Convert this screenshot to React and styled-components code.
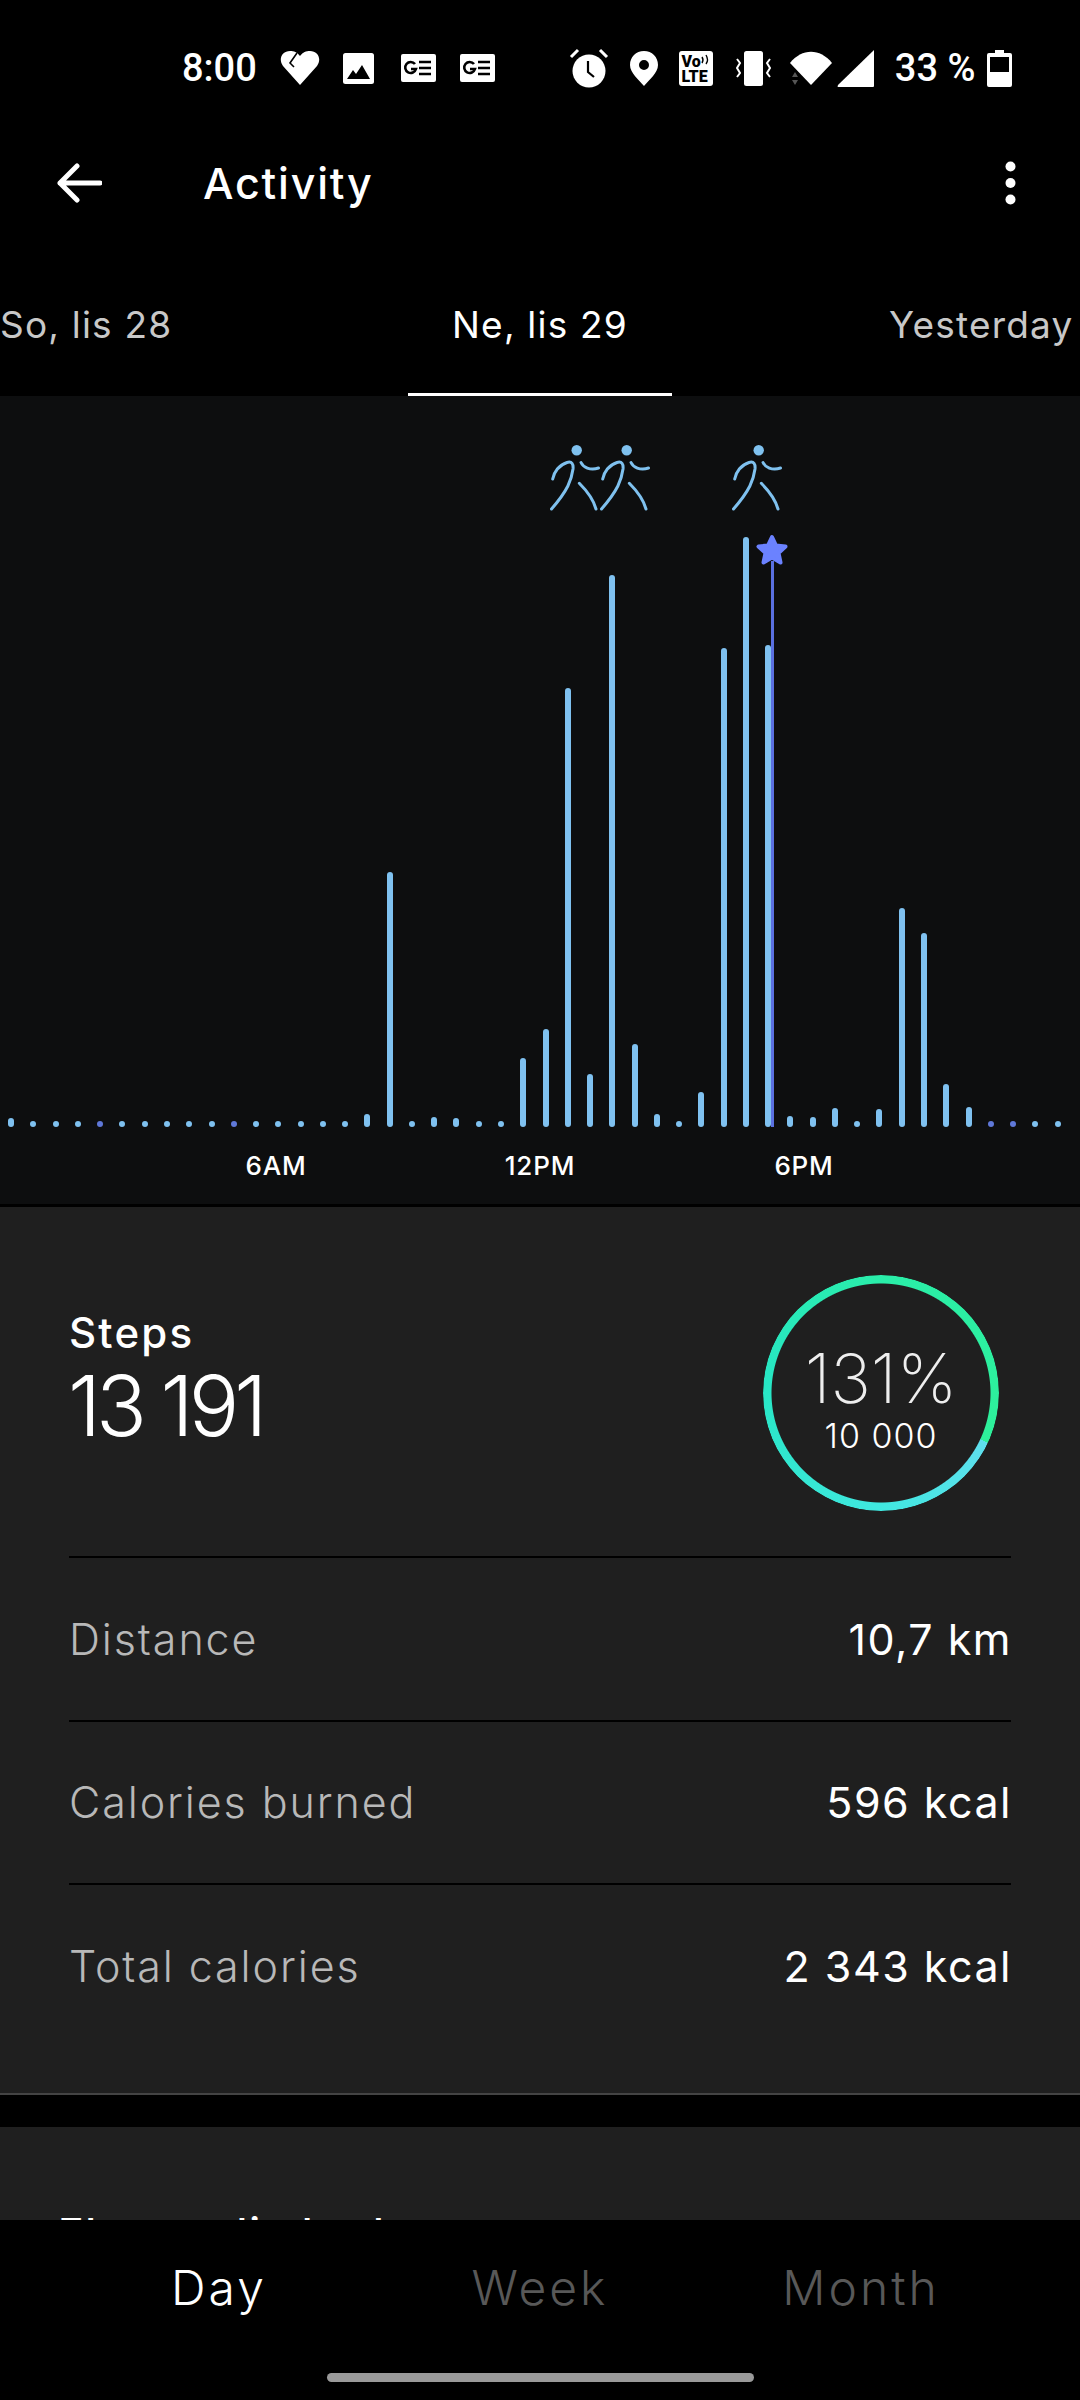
import styled, { createGlobalStyle } from "styled-components";

const GlobalStyle = createGlobalStyle`
  html, body {
    margin: 0;
    padding: 0;
    background: #000;
  }
  * { box-sizing: border-box; }
`;

const Page = styled.div`
  width: 1080px;
  height: 2400px;
  overflow: hidden;
  background: #000;
  color: #fff;
  font-family: Inter, "Noto Sans", sans-serif;
  display: flex;
  flex-direction: column;
`;

const StatusBar = styled.div`
  height: 92px;
  padding: 44px 0 0 182px;
  display: flex;
  align-items: center;
  font-family: Roboto, sans-serif;
  font-weight: 500;
  font-size: 38px;
`;

const StatusText = styled.span`
  margin-left: ${(p) => p.$ml || 0}px;
  white-space: nowrap;
`;

const StatusIcon = styled.svg`
  flex: none;
  margin-left: ${(p) => p.$ml || 0}px;
  fill: #fff;
`;

const Toolbar = styled.div`
  height: 182px;
  padding: 0 64px 0 57px;
  display: flex;
  align-items: center;
  justify-content: space-between;
`;

const ToolbarLeft = styled.div`
  display: flex;
  align-items: center;
  gap: 101px;
`;

const Title = styled.div`
  font-size: 43px;
  font-weight: 500;
  letter-spacing: 1.8px;
`;

const DateTabs = styled.div`
  height: 122px;
  display: grid;
  grid-template-columns: 1fr 264px 1fr;
`;

const DateTab = styled.div`
  font-size: 37px;
  letter-spacing: 1.2px;
  color: ${(p) => (p.$active ? "#fff" : "#c8c8c8")};
  padding: 28px 0 0 ${(p) => p.$indent || 0}px;
  white-space: nowrap;
  text-align: ${(p) => p.$align || "center"};
  border-bottom: 3px solid ${(p) => (p.$active ? "#fff" : "transparent")};
`;

const Chart = styled.div`
  height: 808px;
  background: #0d0e0f;
`;

const Plot = styled.div`
  position: relative;
  height: 731px;
  display: flex;
  align-items: flex-end;
`;

const Slot = styled.div`
  width: 22.27px;
  flex: none;
  display: flex;
  justify-content: center;
`;

const Bar = styled.div`
  width: 6px;
  border-radius: 3px;
  background: ${(p) => (p.$purple ? "#5f78d8" : "#7fc1f0")};
`;

const Marker = styled.svg`
  position: absolute;
  top: 49px;
  left: ${(p) => p.$x}px;
  fill: none;
  stroke: #7fc1ef;
  stroke-width: 3;
  stroke-linecap: round;
`;

const GoalLine = styled.div`
  position: absolute;
  left: 771px;
  top: 165px;
  bottom: 0;
  width: 3px;
  background: #5a70e0;
`;

const GoalStar = styled.svg`
  position: absolute;
  left: 755px;
  top: 138px;
`;

const Axis = styled.div`
  padding: 23px 144px 0;
  display: grid;
  grid-template-columns: repeat(3, 264px);
`;

const AxisLabel = styled.div`
  text-align: center;
  font-size: 26px;
  font-weight: 500;
  letter-spacing: 0.8px;
  line-height: 32px;
`;

const Card = styled.div`
  margin-top: 3px;
  padding: 0 69px 46px;
  background: #1f1f1f;
  border-bottom: 2px solid #444;
`;

const Summary = styled.div`
  height: 349px;
  padding: 68px 12px 0 0;
  display: flex;
  justify-content: space-between;
  align-items: flex-start;
`;

const StepsBlock = styled.div`
  margin-top: 36px;
`;

const StepsLabel = styled.div`
  font-size: 42px;
  font-weight: 500;
  letter-spacing: 2.2px;
  line-height: 44px;
`;

const StepsValue = styled.div`
  margin: 6px 0 0 -1px;
  font-size: 84px;
  font-weight: 300;
  line-height: 90px;
  letter-spacing: -5px;
`;

const Ring = styled.div`
  position: relative;
  width: 236px;
  height: 236px;
  display: flex;
  flex-direction: column;
  align-items: center;
`;

const RingStroke = styled.div`
  position: absolute;
  inset: 0;
  border-radius: 50%;
  background: conic-gradient(
    from 115deg,
    #5fdfee 0deg,
    #40e8e0 65deg,
    #27e6c4 160deg,
    #2aeea8 250deg,
    #2ef09a 360deg
  );
  -webkit-mask: radial-gradient(circle, transparent 109px, #000 110px);
  mask: radial-gradient(circle, transparent 109px, #000 110px);
`;

const RingPercent = styled.div`
  margin-top: 65px;
  font-size: 68px;
  font-weight: 200;
  line-height: 76px;
  color: #eee;
`;

const RingGoal = styled.div`
  font-size: 34px;
  font-weight: 300;
  letter-spacing: 1px;
  line-height: 40px;
`;

const Row = styled.div`
  height: 163.5px;
  border-top: 2px solid #000;
  display: flex;
  align-items: center;
  justify-content: space-between;
  font-size: 43px;
`;

const RowLabel = styled.div`
  color: #b8b8b8;
  font-weight: 300;
  letter-spacing: 1.9px;
`;

const RowValue = styled.div`
  font-weight: 400;
  letter-spacing: 1.5px;
  margin-right: -1px;
`;

const NextCard = styled.div`
  margin-top: 32px;
  height: 93px;
  overflow: hidden;
  padding: 81px 0 0 58px;
  background: #1f1f1f;
  font-size: 43px;
  font-weight: 500;
  letter-spacing: 1.8px;
  line-height: 50px;
`;

const BottomNav = styled.div`
  height: 180px;
  display: flex;
  flex-direction: column;
  align-items: center;
`;

const Periods = styled.div`
  width: 963px;
  height: 136px;
  display: grid;
  grid-template-columns: repeat(3, 321px);
  align-items: center;
`;

const Period = styled.div`
  text-align: center;
  font-size: 48px;
  font-weight: 300;
  letter-spacing: 3px;
  color: ${(p) => (p.$active ? "#fff" : "#585858")};
`;

const HomeBar = styled.div`
  margin-top: 17px;
  width: 427px;
  height: 9px;
  border-radius: 5px;
  background: #9a9a9a;
`;

// top edge of each bar in page pixels, null = a dot
const tops = [
  1118, null, null, null, "p", null, null, null, null, null, "p", null, null, null, null, null,
  1114, 872, null, 1117, 1118, null, null, 1058, 1029, 688, 1074, 575, 1044, 1114, null, 1092,
  648, 537, 645, 1116, 1117, 1108, null, 1109, 908, 933, 1084, 1107, "p", "p", null, null,
];

const Runner = ({ x }) => (
  <Marker $x={x} width="50" height="66" viewBox="0 0 50 66">
    <circle cx="26.7" cy="5.3" r="5.2" fill="#7fc1ef" stroke="none" />
    <path d="M2.7 34 C4 27 9 20 17 17.5 C22 16 23.5 19 23 24 C21.5 35 18 45 1.5 64" />
    <path d="M31 17.5 C33 22 40 26 48.5 23" />
    <path d="M29.3 38.3 C36 45 43 53 46 64" />
  </Marker>
);

const NewsIcon = ({ ml }) => (
  <StatusIcon $ml={ml} width="35" height="28" viewBox="0 0 35 28">
    <rect width="35" height="28" rx="2" />
    <path d="M14 10 A5.5 5.5 0 1 0 15 15 H10" fill="none" stroke="#000" strokeWidth="2.6" />
    <path d="M18 8 H30 M18 14 H30 M18 20 H30" stroke="#000" strokeWidth="2.4" />
  </StatusIcon>
);

const App = () => (
  <Page>
    <GlobalStyle />
    <StatusBar>
      <StatusText>8:00</StatusText>
      <StatusIcon $ml={23} width="40" height="36" viewBox="0 0 40 36">
        <path d="M20 35 L3 16 C-2 9 2 1 10 1 C14 1 17 2 20 6 C23 2 26 1 30 1 C38 1 42 9 37 16 Z" />
        <path d="M17 3 L10 13 L14 17" fill="none" stroke="#000" strokeWidth="1.6" />
      </StatusIcon>
      <StatusIcon $ml={23} width="31" height="31" viewBox="0 0 31 31">
        <rect width="31" height="31" rx="2.5" />
        <path d="M4 26 L10 17 L13 21 L19 12 L27 26 Z" fill="#000" />
      </StatusIcon>
      <NewsIcon ml={27} />
      <NewsIcon ml={24} />
      <StatusIcon $ml={74} width="40" height="40" viewBox="0 0 40 40">
        <circle cx="20" cy="23" r="16.5" />
        <path d="M2 9 L9 2 M38 9 L31 2" stroke="#fff" strokeWidth="3" />
        <path d="M19 13 V24 L25 29" fill="none" stroke="#000" strokeWidth="2.2" />
      </StatusIcon>
      <StatusIcon $ml={21} width="28" height="35" viewBox="0 0 28 35">
        <path fillRule="evenodd" d="M14 0 C6 0 0 6 0 14 C0 22 9 29 14 35 C19 29 28 22 28 14 C28 6 22 0 14 0 Z M14 9 A5 5 0 1 1 14 19 A5 5 0 1 1 14 9 Z" />
      </StatusIcon>
      <StatusIcon $ml={21} width="34" height="35" viewBox="0 0 34 35">
        <rect width="34" height="35" rx="3" />
        <text x="2.5" y="16" fontFamily="Roboto, sans-serif" fontWeight="900" fontSize="16" fill="#000">Vo</text>
        <path d="M23 6 q2 3 0 6 M27 4 q3 5 0 9" fill="none" stroke="#000" strokeWidth="1.4" />
        <text x="2.5" y="31" fontFamily="Roboto, sans-serif" fontWeight="900" fontSize="16" fill="#000">LTE</text>
      </StatusIcon>
      <StatusIcon $ml={22} width="37" height="35" viewBox="0 0 37 35">
        <rect x="9" y="0" width="19" height="35" rx="2.5" />
        <path d="M2 8 L5 12 L2 17 L5 22 L2 26 M35 8 L32 12 L35 17 L32 22 L35 26" fill="none" stroke="#fff" strokeWidth="2" />
      </StatusIcon>
      <StatusIcon $ml={18} width="42" height="35" viewBox="0 0 42 35">
        <path d="M0 12 C12 -3 30 -3 42 12 L21 34 Z" />
        <path d="M2 26 L5 21 L8 26 Z M2 29 L8 29 L5 34 Z" fill="#555" />
      </StatusIcon>
      <StatusIcon $ml={5} width="37" height="37" viewBox="0 0 37 37">
        <path d="M37 0 V36 Q37 37 36 37 H1 Q0 37 1 35 Z" />
      </StatusIcon>
      <StatusText $ml={21}>33 %</StatusText>
      <StatusIcon $ml={12} width="25" height="37" viewBox="0 0 25 37">
        <path fillRule="evenodd" d="M8 0 H17 V3 H23 Q25 3 25 5 V35 Q25 37 23 37 H2 Q0 37 0 35 V5 Q0 3 2 3 H8 Z M3 7 V22 H22 V7 Z" />
      </StatusIcon>
    </StatusBar>

    <Toolbar>
      <ToolbarLeft>
        <svg width="45" height="40" viewBox="0 0 45 40" fill="none" stroke="#fff" strokeWidth="5" strokeLinecap="round" strokeLinejoin="round">
          <path d="M43 20 H3 M20 3 L3 20 L20 37" />
        </svg>
        <Title>Activity</Title>
      </ToolbarLeft>
      <svg width="11" height="44" viewBox="0 0 11 44" fill="#fff">
        <circle cx="5.5" cy="5.5" r="5" />
        <circle cx="5.5" cy="22" r="5" />
        <circle cx="5.5" cy="38.5" r="5" />
      </svg>
    </Toolbar>

    <DateTabs>
      <DateTab $align="left">So, lis 28</DateTab>
      <DateTab $active>Ne, lis 29</DateTab>
      <DateTab $align="left" $indent={217}>Yesterday</DateTab>
    </DateTabs>

    <Chart>
      <Plot>
        {tops.map((top, i) => {
          const isBar = typeof top === "number";
          return (
            <Slot key={i}>
              <Bar
                $purple={top === "p"}
                style={{ height: isBar ? 1127 - top : 6, marginBottom: isBar ? 0 : 0.5 }}
              />
            </Slot>
          );
        })}
        <Runner x={550} />
        <Runner x={600} />
        <Runner x={732} />
        <GoalLine />
        <GoalStar width="34" height="32" viewBox="0 0 34 32">
          <path
            d="M17 3 L21 11.5 L30.5 12.5 L23.5 19 L25.5 28.5 L17 23.5 L8.5 28.5 L10.5 19 L3.5 12.5 L13 11.5 Z"
            fill="#6b82ff"
            stroke="#6b82ff"
            strokeWidth="4"
            strokeLinejoin="round"
          />
        </GoalStar>
      </Plot>
      <Axis>
        <AxisLabel>6AM</AxisLabel>
        <AxisLabel>12PM</AxisLabel>
        <AxisLabel>6PM</AxisLabel>
      </Axis>
    </Chart>

    <Card>
      <Summary>
        <StepsBlock>
          <StepsLabel>Steps</StepsLabel>
          <StepsValue>13 191</StepsValue>
        </StepsBlock>
        <Ring>
          <RingStroke />
          <RingPercent>131%</RingPercent>
          <RingGoal>10 000</RingGoal>
        </Ring>
      </Summary>
      <Row>
        <RowLabel>Distance</RowLabel>
        <RowValue>10,7 km</RowValue>
      </Row>
      <Row>
        <RowLabel>Calories burned</RowLabel>
        <RowValue>596 kcal</RowValue>
      </Row>
      <Row>
        <RowLabel>Total calories</RowLabel>
        <RowValue>2 343 kcal</RowValue>
      </Row>
    </Card>

    <NextCard>Floors climbed</NextCard>

    <BottomNav>
      <Periods>
        <Period $active>Day</Period>
        <Period>Week</Period>
        <Period>Month</Period>
      </Periods>
      <HomeBar />
    </BottomNav>
  </Page>
);

export default App;
